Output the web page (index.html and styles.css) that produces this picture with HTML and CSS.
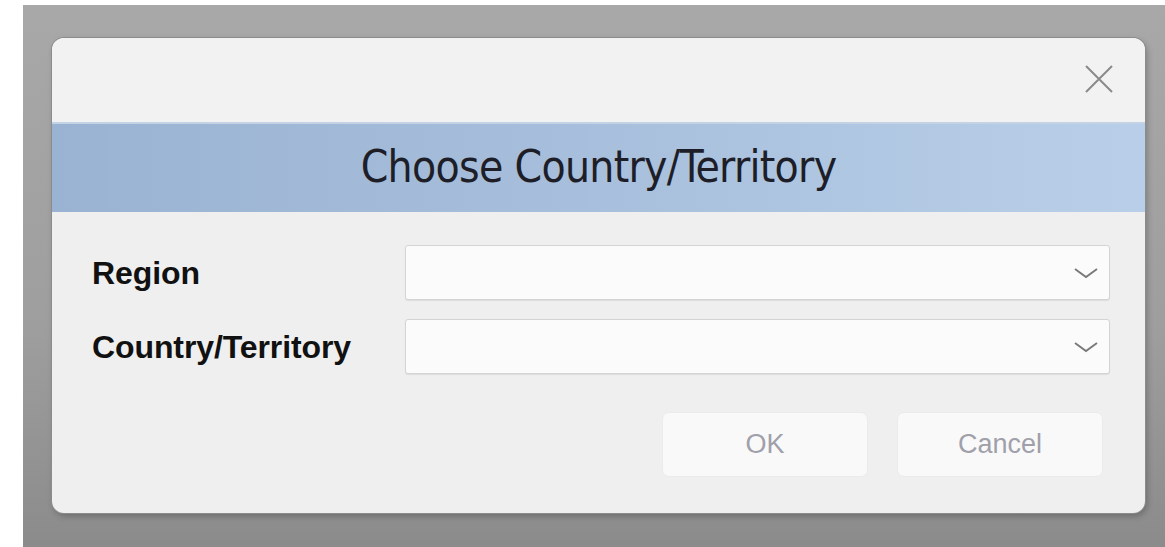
FILE: index.html
```html
<!DOCTYPE html>
<html lang="en">
<head>
<meta charset="utf-8">
<title>Choose Country/Territory</title>
<link rel="stylesheet" href="styles.css">
</head>
<body>
<div class="backdrop">
  <div class="dialog">
    <div class="dialog-top">
      <button class="close" aria-label="Close">
        <svg width="28" height="28" viewBox="0 0 28 28"><path d="M1 1 L27 27 M27 1 L1 27" stroke="#8a8a8a" stroke-width="2" fill="none"/></svg>
      </button>
    </div>
    <div class="banner">Choose Country/Territory</div>
    <div class="form">
      <label class="label">Region</label>
      <div class="combo">
        <svg class="chev" width="24" height="12" viewBox="0 0 24 12"><path d="M1 2 L12 10 L23 2" stroke="#7a7a7a" stroke-width="2" fill="none"/></svg>
      </div>
      <label class="label">Country/Territory</label>
      <div class="combo">
        <svg class="chev" width="24" height="12" viewBox="0 0 24 12"><path d="M1 2 L12 10 L23 2" stroke="#7a7a7a" stroke-width="2" fill="none"/></svg>
      </div>
    </div>
    <div class="actions">
      <button class="btn">OK</button>
      <button class="btn">Cancel</button>
    </div>
  </div>
</div>
</body>
</html>
```

FILE: styles.css
```css
html, body {
  margin: 0;
  padding: 0;
  background: #ffffff;
}

.backdrop {
  margin: 5px 0 0 23px;
  height: 542px;
  box-sizing: border-box;
  padding: 33px 0 0 29px;
  background: linear-gradient(180deg, #a8a8a8 0%, #9e9e9e 60%, #8b8b8b 100%);
}

.dialog {
  width: 1093px;
  height: 475px;
  box-sizing: border-box;
  background: #efefef;
  border-radius: 12px;
  box-shadow: 0 0 0 1px #8c8c8c, 2px 3px 6px rgba(0, 0, 0, 0.25);
  overflow: hidden;
  display: flex;
  flex-direction: column;
}

.dialog-top {
  height: 84px;
  background: #f2f2f2;
  display: flex;
  justify-content: flex-end;
  align-items: flex-start;
  padding: 27px 32px 0 0;
  box-sizing: border-box;
}

.close {
  width: 28px;
  height: 28px;
  padding: 0;
  border: 0;
  background: none;
  display: block;
}

.close svg {
  display: block;
}

.banner {
  height: 90px;
  box-sizing: border-box;
  border-top: 2px solid #c3d2e4;
  background: linear-gradient(90deg, #9ab3d2 0%, #a6bedb 45%, #b9cfe9 100%);
  display: flex;
  align-items: center;
  justify-content: center;
  font-family: "DejaVu Sans Condensed", "DejaVu Sans", sans-serif;
  font-size: 44px;
  letter-spacing: -0.7px;
  color: #1e1e28;
  padding-bottom: 4px;
}

.form {
  display: grid;
  grid-template-columns: 313px 1fr;
  row-gap: 19px;
  padding: 33px 35px 0 40px;
  align-items: center;
}

.label {
  font-family: "Liberation Sans", Arial, sans-serif;
  font-weight: bold;
  font-size: 32px;
  letter-spacing: -0.1px;
  color: #111111;
  padding-top: 2px;
}

.combo {
  height: 55px;
  box-sizing: border-box;
  background: #fbfbfb;
  border: 1px solid #d4d4d4;
  border-radius: 3px;
  box-shadow: 0 1px 1px rgba(0, 0, 0, 0.08);
  display: flex;
  align-items: center;
  justify-content: flex-end;
  padding-right: 11px;
}

.chev {
  display: block;
}

.actions {
  display: flex;
  justify-content: flex-end;
  gap: 29px;
  padding: 38px 42px 0 0;
}

.btn {
  width: 206px;
  height: 65px;
  background: #f9f9f9;
  border: 1px solid #ebebeb;
  border-radius: 7px;
  font-family: "Liberation Sans", Arial, sans-serif;
  font-size: 27px;
  color: #a0a0aa;
  padding: 0;
}
```
